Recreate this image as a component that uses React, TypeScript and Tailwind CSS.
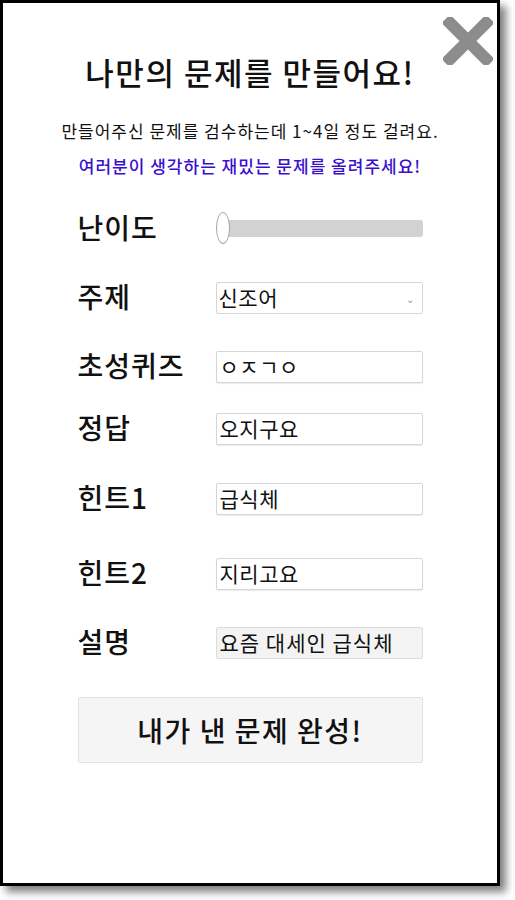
import React from "react";

const fields = [
  { label: "초성퀴즈", value: "ㅇㅈㄱㅇ", gap: "mt-[29px]" },
  { label: "정답", value: "오지구요", gap: "mt-[22px]" },
  { label: "힌트1", value: "급식체", gap: "mt-[30px]" },
  { label: "힌트2", value: "지리고요", gap: "mt-[35px]" },
];

const font = { fontFamily: '"Noto Sans CJK KR", "Noto Sans", sans-serif' };

const CloseIcon = () => (
  <svg width="50" height="48" viewBox="0 0 50 48" aria-hidden>
    <path d="M7 6 L43 42 M43 6 L7 42" stroke="#8c8c8c" strokeWidth="12" strokeLinecap="square" />
  </svg>
);

const App = () => {
  return (
    <div className="w-[515px] h-[900px] bg-white" style={font}>
      <div className="relative w-[500px] h-[886px] border-[3px] border-black bg-white shadow-[6px_6px_8px_rgba(0,0,0,0.5)]">
        <button type="button" aria-label="닫기" className="absolute top-[14px] right-[4px]">
          <CloseIcon />
        </button>

        <h1 className="mt-[49px] text-center text-[31px] leading-[40px] tracking-[1.5px] font-medium text-[#111]">
          나만의 문제를 만들어요!
        </h1>
        <p className="mt-[27px] text-center text-[17px] leading-[24px] tracking-[1px] text-[#111]">
          만들어주신 문제를 검수하는데 1~4일 정도 걸려요.
        </p>
        <p className="mt-[11px] text-center text-[17px] leading-[24px] tracking-[1px] font-medium text-[#3a0fd0]">
          여러분이 생각하는 재밌는 문제를 올려주세요!
        </p>

        <div className="mx-auto w-[345px] flex flex-col">
          <div className="mt-[30px] h-[40px] flex items-center">
            <span className="w-[138px] pb-[2px] text-[28px] tracking-[1px] font-medium text-[#111]">난이도</span>
            <div className="relative flex-1 h-[32px] flex items-center">
              <div className="ml-[4px] flex-1 h-[17px] rounded-[3px] bg-[#d2d2d2]" />
              <div className="absolute left-0 top-0 w-[14px] h-[32px] rounded-[50%] border border-[#a8a8a8] bg-white" />
            </div>
          </div>

          <div className="mt-[30px] h-[40px] flex items-center">
            <span className="w-[138px] pb-[4px] text-[28px] tracking-[1px] font-medium text-[#111]">주제</span>
            <div className="flex-1 h-[32px] flex items-center justify-between border border-[#d6d6d6] rounded-[2px] pl-[2px] pr-[8px] bg-white">
              <span className="text-[21px] tracking-[0.5px] text-[#111]">신조어</span>
              <span className="text-[10px] text-[#999]">⌄</span>
            </div>
          </div>

          {fields.map((f) => (
            <div key={f.label} className={`${f.gap} h-[40px] flex items-center`}>
              <span className="w-[138px] pb-[4px] text-[28px] tracking-[1px] font-medium text-[#111] whitespace-nowrap">
                {f.label}
              </span>
              <div className="flex-1 h-[32px] flex items-center border border-[#d6d6d6] rounded-[2px] pl-[3px] bg-white shadow-[0_1px_1px_rgba(0,0,0,0.08)]">
                <span className="text-[21px] tracking-[0.5px] text-[#111]">{f.value}</span>
              </div>
            </div>
          ))}

          <div className="mt-[29px] h-[40px] flex items-center">
            <span className="w-[138px] pb-[4px] text-[28px] tracking-[1px] font-medium text-[#111]">설명</span>
            <div className="flex-1 h-[32px] flex items-center border border-[#dcdcdc] rounded-[2px] pl-[3px] bg-[#f3f3f3]">
              <span className="text-[21px] tracking-[1px] text-[#111] whitespace-nowrap">요즘 대세인 급식체</span>
            </div>
          </div>

          <button
            type="button"
            className="mt-[34px] h-[66px] w-full border border-[#e2e2e2] rounded-[2px] bg-[#f5f5f5] text-[28px] tracking-[1.5px] font-medium text-[#111]"
          >
            내가 낸 문제 완성!
          </button>
        </div>
      </div>
    </div>
  );
};

export default App;
